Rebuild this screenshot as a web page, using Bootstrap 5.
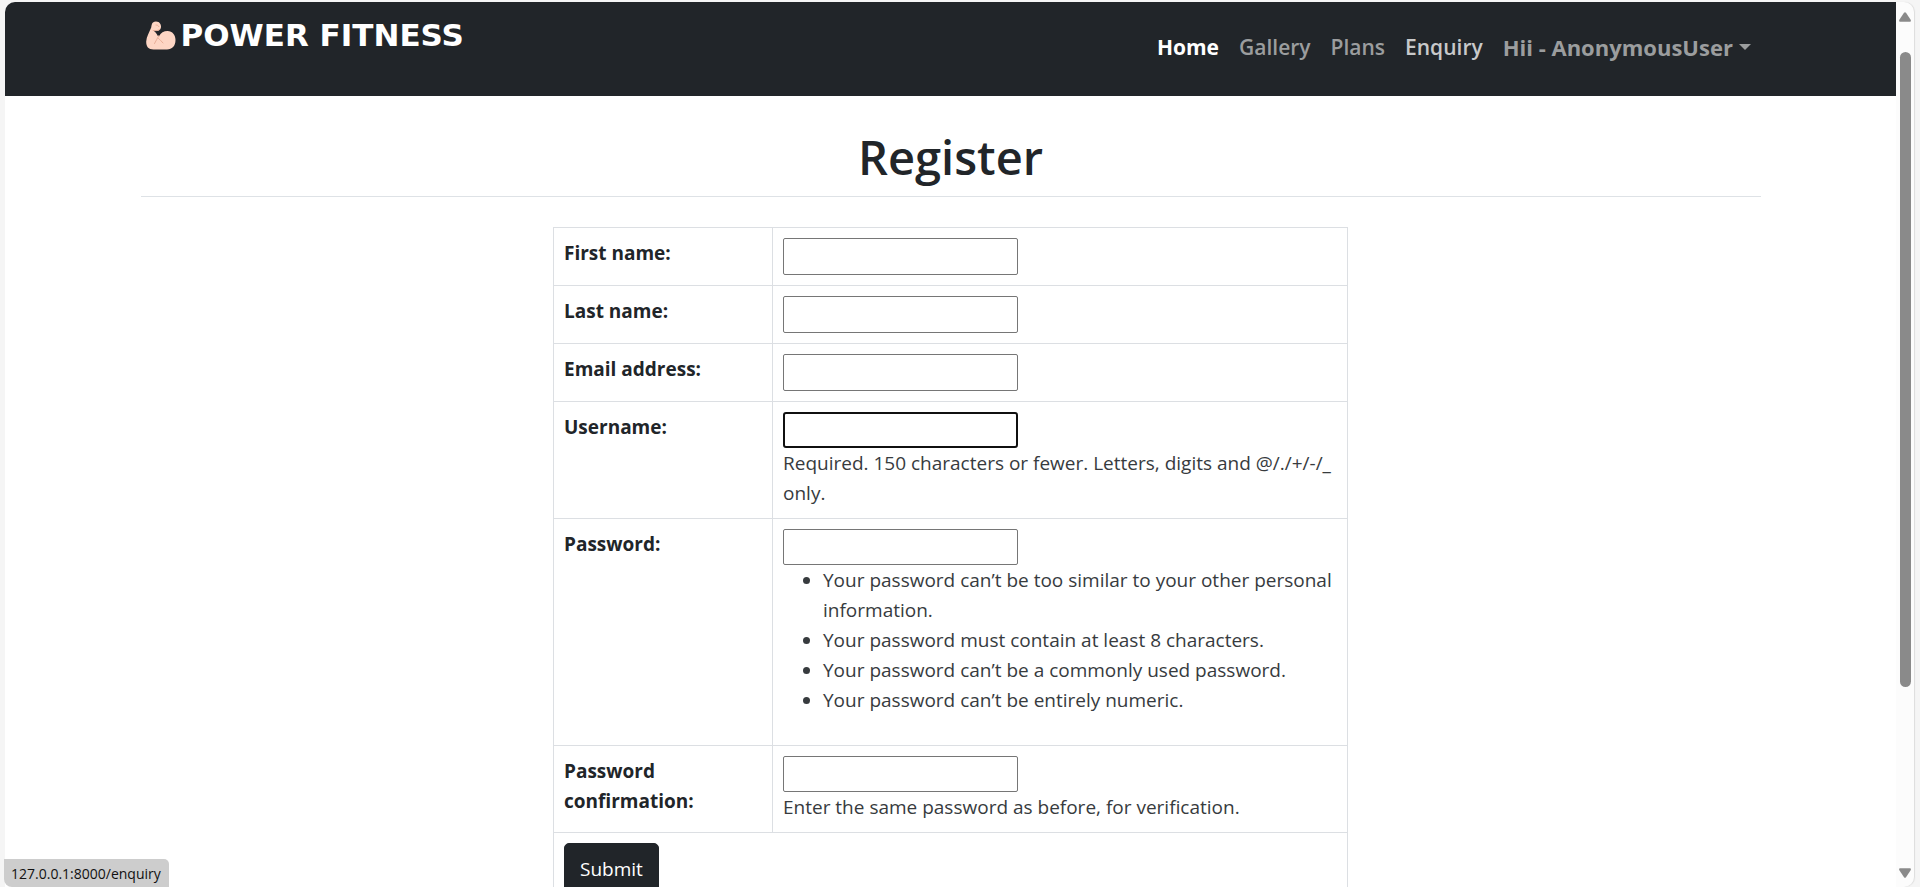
<!DOCTYPE html>
<html lang="en">
<head>
<meta charset="utf-8">
<meta name="viewport" content="width=device-width, initial-scale=1">
<title>Power Fitness - Register</title>
<link href="https://cdn.jsdelivr.net/npm/bootstrap@5.3.0/dist/css/bootstrap.min.css" rel="stylesheet">
<style>
  html { font-size: 20px; }
  body { font-family: "Open Sans", "Noto Sans", sans-serif; font-size: 19px; line-height: 30px; background: #f5f5f5; }
  .container { max-width: 1650px; }
  .browser-window { height: 100vh; padding: 2px 6px 0 5px; }
  .page-pane { background: #fff; border-top-left-radius: 10px; }
  .scroll-rail { width: 18px; background: #fcfcfc; border-radius: 0 10px 10px 0; padding: 10px 0 9px; box-shadow: 1px 0 1px #ddd; }
  .scroll-thumb { width: 11px; height: 635px; margin-top: 30px; border-radius: 6px; background: #8a8a8a; }
  .site-nav { min-height: 94px; padding: 10px 0 0; background: #212529; align-items: flex-start; }
  .site-nav .container { align-items: flex-start; }
  .navbar-brand { font-family: "DejaVu Sans", Verdana, sans-serif; font-size: 31px; font-weight: 700; line-height: 28px; gap: 5px; margin-left: 5px; padding: 9px 0 0; }
  .site-nav .navbar-nav { font-size: 21px; font-weight: 600; }
  .site-nav .nav-link { padding: 20px 10px; line-height: 30px; color: #9b9d9e; }
  .site-nav .nav-link.active { color: #fff; font-weight: 700; }
  .site-nav .nav-link.hovered { color: #c8c9ca; }
  .site-nav .dropdown-toggle { font-size: 22px; font-weight: 700; }
  .page-title { font-size: 47px; line-height: 62px; font-weight: 600; padding-bottom: 8px; }
  .register-table { --bs-table-border-color: #dcdfe3; border-color: #dcdfe3; }
  .register-table th { width: 219px; }
  .register-table th, .register-table td { padding: 10px; vertical-align: top; }
  .text-field { display: block; width: 235px; height: 37px; border: 1px solid #767676; border-radius: 2px; background: #fff; outline: 0; }
  .text-field.focused, .text-field[type="password"] { height: 36px; }
  .text-field.focused { border: 2px solid #101010; border-radius: 3px; }
  .helptext { color: #373b3e; }
  .btn-submit { font-size: 19px; line-height: 30px; padding: 10px 15px; border-radius: 5px; }
  .status-bubble { left: 4px; bottom: 0; height: 28px; padding: 0 8px 0 7px; background: #cdcdcd; color: #111; font-size: 14px; line-height: 29px; border-radius: 0 5px 0 8px; }
</style>
</head>
<body>
<div class="browser-window d-flex overflow-hidden">
  <div class="page-pane flex-grow-1 overflow-hidden">
    <nav class="navbar navbar-expand site-nav" aria-label="Main">
      <div class="container">
        <a class="navbar-brand d-flex text-white" href="#">
          <svg width="30" height="30" viewBox="0 0 30 30" aria-hidden="true">
            <path fill="#fdd6c4" d="M7 1.5C9 0 13 .2 14.500 3.200C15.600 5.500 15 8 13.200 9.200C11.900 9.900 10.900 10 10.500 10.200L13 15.500C14.500 11.800 18 10 21.500 10C26.500 10.200 29.500 14 29.500 19C29.500 25 26 28.500 21 28.500H7.500C2.500 28.500 0 25.500 .2 20.500C.5 16 3 11.500 5.200 6.500C5.600 4 5.800 2.500 7 1.500Z"/>
            <path fill="#212529" d="M7.500 9.800L11.500 9.800L13.800 13.600L12 15.200C10.700 13 9.500 11 7.500 9.800Z"/>
            <path fill="none" stroke="#e8ae97" stroke-width="1" stroke-linecap="round" d="M8.500 22.500C9.500 20 11.500 17.500 13 14.500M17 22C15.500 20.500 14.500 19 12.500 17.500M7.200 9.500C9 9.900 12 9.800 13.600 8.500M10 4C11.500 4 12.500 4.500 12.800 5.500"/>
          </svg>
          <span>POWER FITNESS</span>
        </a>
        <ul class="navbar-nav ms-auto">
          <li class="nav-item"><a class="nav-link active" aria-current="page" href="#">Home</a></li>
          <li class="nav-item"><a class="nav-link" href="#">Gallery</a></li>
          <li class="nav-item"><a class="nav-link" href="#">Plans</a></li>
          <li class="nav-item"><a class="nav-link hovered" href="#">Enquiry</a></li>
          <li class="nav-item dropdown"><a class="nav-link dropdown-toggle" href="#" role="button" data-bs-toggle="dropdown" aria-expanded="false">Hii - AnonymousUser</a></li>
        </ul>
      </div>
    </nav>

    <main class="container pt-4">
      <h1 class="page-title text-center border-bottom mb-0">Register</h1>
      <div class="row pt-4">
        <div class="col-6 offset-3">
          <form>
            <table class="table table-bordered register-table">
              <tbody>
                <tr>
                  <th scope="row"><label for="first_name">First name:</label></th>
                  <td><input class="text-field" type="text" id="first_name"></td>
                </tr>
                <tr>
                  <th scope="row"><label for="last_name">Last name:</label></th>
                  <td><input class="text-field" type="text" id="last_name"></td>
                </tr>
                <tr>
                  <th scope="row"><label for="email">Email address:</label></th>
                  <td><input class="text-field" type="email" id="email"></td>
                </tr>
                <tr>
                  <th scope="row"><label for="username">Username:</label></th>
                  <td><input class="text-field focused" type="text" id="username">
                    <span class="helptext">Required. 150 characters or fewer. Letters, digits and @/./+/-/_ only.</span></td>
                </tr>
                <tr>
                  <th scope="row"><label for="password1">Password:</label></th>
                  <td><input class="text-field" type="password" id="password1">
                    <ul class="helptext">
                      <li>Your password can’t be too similar to your other personal information.</li>
                      <li>Your password must contain at least 8 characters.</li>
                      <li>Your password can’t be a commonly used password.</li>
                      <li>Your password can’t be entirely numeric.</li>
                    </ul></td>
                </tr>
                <tr>
                  <th scope="row"><label for="password2">Password confirmation:</label></th>
                  <td><input class="text-field" type="password" id="password2">
                    <span class="helptext">Enter the same password as before, for verification.</span></td>
                </tr>
                <tr>
                  <td colspan="2"><button class="btn btn-dark btn-submit" type="submit">Submit</button></td>
                </tr>
              </tbody>
            </table>
          </form>
        </div>
      </div>
    </main>
  </div>

  <div class="scroll-rail d-flex flex-column align-items-center flex-shrink-0" aria-hidden="true">
    <svg width="12" height="10" viewBox="0 0 12 10"><path fill="#8a8a8a" d="M5 .8Q6-.4 7 .8L11.800 8Q12.200 9.800 11 9.800H1Q-.2 9.800 .2 8Z"/></svg>
    <div class="scroll-thumb"></div>
    <svg class="mt-auto" width="12" height="10" viewBox="0 0 12 10"><path fill="#8a8a8a" d="M5 9.200Q6 10.400 7 9.200L11.800 2Q12.200.2 11 .2H1Q-.2.2 .2 2Z"/></svg>
  </div>
</div>
<div class="status-bubble position-fixed">127.0.0.1:8000/enquiry</div>
<script src="https://cdn.jsdelivr.net/npm/bootstrap@5.3.0/dist/js/bootstrap.bundle.min.js"></script>
</body>
</html>
